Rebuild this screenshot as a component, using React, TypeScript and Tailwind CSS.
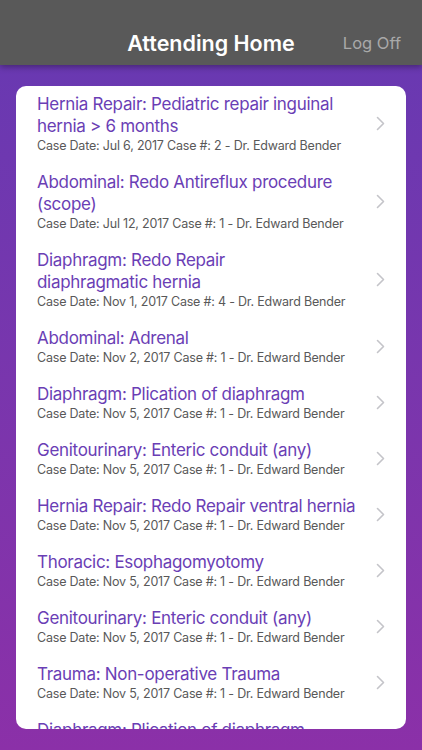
import React from "react";

const rows: { title: string[]; sub: string }[] = [
  { title: ["Hernia Repair: Pediatric repair inguinal", "hernia > 6 months"], sub: "Case Date: Jul 6, 2017 Case #: 2 - Dr. Edward Bender" },
  { title: ["Abdominal: Redo Antireflux procedure", "(scope)"], sub: "Case Date: Jul 12, 2017 Case #: 1 - Dr. Edward Bender" },
  { title: ["Diaphragm: Redo Repair", "diaphragmatic hernia"], sub: "Case Date: Nov 1, 2017 Case #: 4 - Dr. Edward Bender" },
  { title: ["Abdominal: Adrenal"], sub: "Case Date: Nov 2, 2017 Case #: 1 - Dr. Edward Bender" },
  { title: ["Diaphragm: Plication of diaphragm"], sub: "Case Date: Nov 5, 2017 Case #: 1 - Dr. Edward Bender" },
  { title: ["Genitourinary: Enteric conduit (any)"], sub: "Case Date: Nov 5, 2017 Case #: 1 - Dr. Edward Bender" },
  { title: ["Hernia Repair: Redo Repair ventral hernia"], sub: "Case Date: Nov 5, 2017 Case #: 1 - Dr. Edward Bender" },
  { title: ["Thoracic: Esophagomyotomy"], sub: "Case Date: Nov 5, 2017 Case #: 1 - Dr. Edward Bender" },
  { title: ["Genitourinary: Enteric conduit (any)"], sub: "Case Date: Nov 5, 2017 Case #: 1 - Dr. Edward Bender" },
  { title: ["Trauma: Non-operative Trauma"], sub: "Case Date: Nov 5, 2017 Case #: 1 - Dr. Edward Bender" },
  { title: ["Diaphragm: Plication of diaphragm"], sub: "Case Date: Nov 5, 2017 Case #: 1 - Dr. Edward Bender" },
];

function Chevron() {
  return (
    <svg width="9" height="15" viewBox="0 0 9 15" fill="none" className="shrink-0">
      <path d="M1.5 1.5 L7.5 7.5 L1.5 13.5" stroke="#c4c4c9" strokeWidth="1.6" strokeLinecap="round" strokeLinejoin="round" />
    </svg>
  );
}

export default function App() {
  return (
    <div
      className="relative w-[422px] h-[750px] overflow-hidden bg-gradient-to-b from-[#6639b2] to-[#8b30a8] flex flex-col"
      style={{ fontFamily: "Inter, 'Open Sans', 'Liberation Sans', sans-serif" }}
    >
      <div className="relative z-10 h-[65px] shrink-0 bg-[#595959] shadow-[0_2px_6px_rgba(0,0,0,0.35)] flex items-end pb-[8px]">
        <div className="flex-1 flex justify-center">
          <span className="text-white text-[21.5px] leading-[28px] font-semibold">Attending Home</span>
        </div>
        <span className="absolute right-[21px] bottom-[10px] leading-[24px] text-[#a9a9a9] text-[16.5px]">Log Off</span>
      </div>
      <div className="mx-[16px] mt-[21px] h-[643px] bg-white rounded-[10px] overflow-hidden">
        {rows.map((r, i) => (
          <div key={i} className="flex items-center pl-[21px] pr-[21px] pt-[7px] pb-[10px]">
            <div className="flex-1 min-w-0">
              {r.title.map((line, j) => (
                <div key={j} className="text-[#6a3eb5] text-[17px] leading-[22px] tracking-[-0.3px] whitespace-nowrap">
                  {line}
                </div>
              ))}
              <div className="text-[#595959] text-[12.5px] leading-[17px] tracking-[-0.2px] whitespace-nowrap">{r.sub}</div>
            </div>
            <Chevron />
          </div>
        ))}
      </div>
    </div>
  );
}
